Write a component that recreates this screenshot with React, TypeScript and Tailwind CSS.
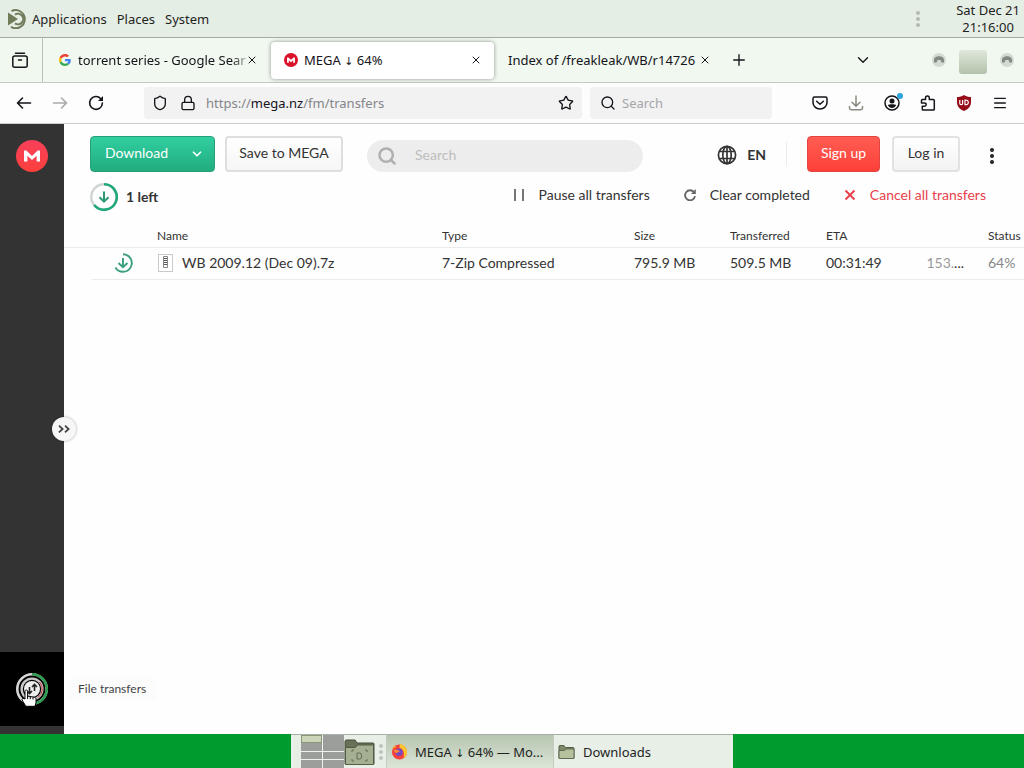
import type { ReactNode } from 'react';
import { ChevronDown, Lock, Menu, Plus, Search, Shield, Star, X } from 'lucide-react';

const CHROME_FONT = "font-['Noto_Sans',sans-serif]";
const MEGA_FONT = "font-['Lato',sans-serif]";

interface IconButtonProps {
    label: string;
    className?: string;
    children?: ReactNode;
}

function IconButton({ label, className = '', children }: IconButtonProps) {
    return (
        <button type="button" aria-label={label} className={`flex shrink-0 items-center justify-center ${className}`}>
            {children}
        </button>
    );
}

function MegaLogo({ className }: { className: string }) {
    return (
        <svg className={className} viewBox="0 0 32 32" aria-hidden="true">
            <defs>
                <linearGradient id="mega-red" x1="0" y1="0" x2="0" y2="1">
                    <stop offset="0" stopColor="#f9405a" />
                    <stop offset="1" stopColor="#fb3f3d" />
                </linearGradient>
            </defs>
            <circle cx="16" cy="16" r="16" fill="url(#mega-red)" />
            <path d="M8 21.5V10.5h2.4l5.6 5.4 5.6-5.4H24v11h-3.4v-5.8L16 20l-4.6-4.3v5.8z" fill="#fff" />
        </svg>
    );
}

/* Small tab icon: deeper red and a heavier letter mark than the big logo */
function MegaFavicon() {
    return (
        <svg className="mr-[6px] h-[14px] w-[14px] shrink-0" viewBox="0 0 32 32" aria-hidden="true">
            <circle cx="16" cy="16" r="16" fill="#d9122a" />
            <path d="M7 22V10h3l6 5.600 6-5.600h3v12h-4v-5.500l-5 4.600-5-4.600V22z" fill="#fff" />
        </svg>
    );
}

function DownArrow() {
    return <span className="font-['DejaVu_Sans',sans-serif] text-[11px]">↓</span>;
}

/* Desktop panel at the top */
function TopPanel() {
    return (
        <header className="flex h-[38px] shrink-0 items-center border-b border-[#a3aba3] bg-[#e5eee4] pr-1 pl-2 text-[13px] text-[#1e231e]">
            <svg className="mr-1 h-5 w-5 shrink-0" viewBox="0 0 20 20" fill="none" aria-hidden="true">
                <path d="M0 3.5l10 6.500-10 6.500z" fill="#707b58" />
                <path d="M3.500 2.2A9 9 0 1 1 3 17.8" stroke="#6f7a5a" strokeWidth="2" />
                <path d="M7 5.6A5.3 5.3 0 1 1 7 14.4" stroke="#6f7a5a" strokeWidth="2" />
            </svg>
            <nav className="flex gap-[10px] pt-[2px]">
                <button type="button">Applications</button>
                <button type="button">Places</button>
                <button type="button">System</button>
            </nav>
            <div className="ml-auto flex items-center gap-9">
                <svg className="h-4 w-1" viewBox="0 0 4 16" fill="#b3bab3" aria-hidden="true">
                    <circle cx="2" cy="2" r="2" />
                    <circle cx="2" cy="8" r="2" />
                    <circle cx="2" cy="14" r="2" />
                </svg>
                <time className="text-center text-[13px] leading-[17px]">
                    Sat Dec 21
                    <br />
                    21:16:00
                </time>
            </div>
        </header>
    );
}

function WindowDot() {
    return (
        <svg className="h-4 w-4" viewBox="0 0 16 16" aria-hidden="true">
            <circle cx="8" cy="8" r="7" fill="#d3dad1" />
            <path d="M3 8c0-5 10-5 10 0v2.500h-2.500L9.500 8h-3l-1 2.500H3z" fill="#828882" />
        </svg>
    );
}

/* Firefox tab strip */
function TabStrip() {
    return (
        <div className="flex h-[45px] shrink-0 items-center border-b border-[#c3cbc3] bg-[#f0f8ef] text-[13px] text-[#15141a]">
            <div className="flex h-full w-[43px] shrink-0 items-center border-r border-[#b9c2b9]">
                <IconButton label="Recent browsing" className="ml-3 h-4 w-4">
                    <svg className="h-4 w-4" viewBox="0 0 16 16" fill="none" stroke="#15141a" strokeWidth="1.5" strokeLinecap="round">
                        <path d="M3.500 1.200h9" />
                        <rect x="0.8" y="4" width="14.400" height="11.200" rx="2" />
                        <path d="M6.500 8h3" />
                    </svg>
                </IconButton>
            </div>

            <div className="flex w-[228px] shrink-0 items-center justify-between pr-[14px] pl-4">
                <div className="flex items-center">
                    <svg className="mr-[7px] h-3 w-3 shrink-0" viewBox="0 0 48 48" aria-hidden="true">
                        <path fill="#ea4335" d="M24 9.500c3.500 0 6.700 1.200 9.200 3.600l6.900-6.900C35.900 2.400 30.500 0 24 0 14.600 0 6.500 5.400 2.600 13.200l8 6.200C12.400 13.700 17.700 9.500 24 9.500z" />
                        <path fill="#4285f4" d="M47 24.600c0-1.600-.2-3.100-.4-4.600H24v9h12.900c-.6 3-2.300 5.500-4.800 7.200l7.700 6C44.400 38 47 31.800 47 24.600z" />
                        <path fill="#fbbc05" d="M10.500 28.600a14.500 14.500 0 0 1 0-9.200l-8-6.200a24 24 0 0 0 0 21.600z" />
                        <path fill="#34a853" d="M24 48c6.500 0 11.900-2.100 15.900-5.800l-7.700-6c-2.200 1.500-4.900 2.300-8.200 2.300-6.300 0-11.600-4.200-13.500-9.900l-8 6.200C6.500 42.600 14.600 48 24 48z" />
                    </svg>
                    <span className="pt-[2px] whitespace-nowrap [mask-image:linear-gradient(to_left,rgba(0,0,0,0.3),black_14px)]">
                        torrent series - Google Sear
                    </span>
                </div>
                <IconButton label="Close tab" className="h-3 w-3">
                    <X className="h-3 w-3" />
                </IconButton>
            </div>

            <div className="flex h-[37px] w-[223px] shrink-0 items-center rounded-[4px] bg-white pr-3 pl-[13px] shadow-[0_0_4px_rgba(0,0,0,0.4)]">
                <MegaFavicon />
                <span className="flex-1 pt-[2px] whitespace-nowrap">
                    MEGA <DownArrow /> 64%
                </span>
                <IconButton label="Close tab" className="h-3 w-3">
                    <X className="h-3 w-3" />
                </IconButton>
            </div>

            <div className="flex shrink-0 items-center pl-[14px]">
                <span className="pt-[2px] whitespace-nowrap">Index of /freakleak/WB/r14726</span>
                <IconButton label="Close tab" className="ml-1 h-3 w-3">
                    <X className="h-3 w-3" />
                </IconButton>
            </div>
            <IconButton label="New tab" className="ml-5 h-4 w-4">
                <Plus className="h-[18px] w-[18px] shrink-0" strokeWidth={1.8} />
            </IconButton>

            <div className="ml-auto flex items-center">
                <IconButton label="List all tabs" className="mr-15 h-4 w-4">
                    <ChevronDown className="h-[18px] w-[18px] shrink-0" strokeWidth={1.8} />
                </IconButton>
                <IconButton label="Minimize">
                    <WindowDot />
                </IconButton>
                <IconButton
                    label="Maximize"
                    className="mx-3 mt-1 h-6 w-7 rounded-[3px] bg-linear-to-b from-[#dfe8da] to-[#b3c2ac]"
                />
                <IconButton label="Close window" className="mr-[9px]">
                    <WindowDot />
                </IconButton>
            </div>
        </div>
    );
}

/* Firefox navigation bar */
function NavBar() {
    return (
        <div className="flex h-[41px] shrink-0 items-center border-b border-[#cccccc] bg-[#fdfdfd] pr-4 pl-4 text-[13px] text-[#15141a]">
            <div className="flex shrink-0 items-center gap-5">
                <IconButton label="Back" className="h-4 w-4">
                    <svg className="h-4 w-4" viewBox="0 0 16 16" fill="none" stroke="#15141a" strokeWidth="1.6" strokeLinecap="round" strokeLinejoin="round">
                        <path d="M14.500 8H1.500M6.500 3l-5 5 5 5" />
                    </svg>
                </IconButton>
                <IconButton label="Forward" className="h-4 w-4">
                    <svg className="h-4 w-4" viewBox="0 0 16 16" fill="none" stroke="#aaaaad" strokeWidth="1.600" strokeLinecap="round" strokeLinejoin="round">
                        <path d="M1.500 8h13M9.500 3l5 5-5 5" />
                    </svg>
                </IconButton>
                <IconButton label="Reload" className="h-4 w-4">
                    <svg className="h-4 w-4" viewBox="0 0 16 16" fill="none" stroke="#15141a" strokeWidth="1.600" strokeLinecap="round">
                        <path d="M12.800 3.700A6.400 6.400 0 1 0 14.400 8" />
                        <path d="M15 1v5h-5z" fill="#15141a" stroke="none" />
                    </svg>
                </IconButton>
            </div>

            <div className="ml-10 flex h-8 flex-1 items-center rounded-[4px] bg-[#f2f2f3] px-2">
                <Shield className="mr-3 h-4 w-4 shrink-0" strokeWidth={2} />
                <Lock className="mr-[10px] h-4 w-4 shrink-0" strokeWidth={2} />
                <a href="https://mega.nz/fm/transfers" className="flex-1 pt-[2px] whitespace-nowrap text-[#85858a]">
                    https://<span className="text-[#15141a]">mega.nz</span>/fm/transfers
                </a>
                <IconButton label="Bookmark" className="h-4 w-4">
                    <Star className="h-4 w-4 shrink-0" strokeWidth={2} />
                </IconButton>
            </div>

            <label className="ml-2 flex h-8 w-[182px] shrink-0 items-center rounded-[4px] bg-[#f2f2f3] px-[10px]">
                <Search className="mr-[6px] h-4 w-4 shrink-0" strokeWidth={2} />
                <input
                    type="text"
                    aria-label="Web search"
                    placeholder="Search"
                    className="w-full min-w-0 bg-transparent pt-[2px] outline-none placeholder:text-[#a5a5a8]"
                />
            </label>

            <div className="ml-10 flex shrink-0 items-center gap-5">
                <IconButton label="Save to Pocket" className="h-4 w-4">
                    <svg className="h-4 w-4" viewBox="0 0 16 16" fill="none" stroke="#15141a" strokeWidth="1.500" strokeLinecap="round" strokeLinejoin="round">
                        <path d="M2.500 2h11c.8 0 1.500.6 1.500 1.400V7.500a7 6.600 0 0 1-14 0V3.400C1 2.600 1.700 2 2.500 2z" />
                        <path d="M4.600 6.200L8 9.300l3.400-3.100" />
                    </svg>
                </IconButton>
                <IconButton label="Downloads" className="h-4 w-4">
                    <svg className="h-4 w-4" viewBox="0 0 16 16" fill="none" stroke="#8a8a80" strokeWidth="1.500" strokeLinecap="round" strokeLinejoin="round">
                        <path d="M8 1v10M4 7.200l4 3.900 4-3.900M1.500 11.500V13c0 1 .7 1.700 1.700 1.700h9.600c1 0 1.700-.7 1.700-1.700v-1.500" />
                    </svg>
                </IconButton>
                <IconButton label="Account" className="relative h-4 w-4">
                    <svg className="h-4 w-4" viewBox="0 0 16 16" aria-hidden="true">
                        <circle cx="8" cy="8" r="7" fill="none" stroke="#15141a" strokeWidth="1.500" />
                        <circle cx="8" cy="6" r="2.500" fill="#15141a" />
                        <path d="M3.800 10c1.200-1 7.200-1 8.400 0-.8 2-2.400 3-4.200 3s-3.400-1-4.200-3z" fill="#15141a" />
                    </svg>
                    <span className="absolute -top-[2px] -right-[3px] h-[6px] w-[6px] rounded-full bg-[#2ba3dd]" />
                </IconButton>
                <IconButton label="Extensions" className="h-4 w-4">
                    <svg className="h-4 w-4" viewBox="0 0 16 16" fill="none" stroke="#15141a" strokeWidth="1.500" strokeLinejoin="round">
                        <path d="M5.500 4.500V3a1.900 1.900 0 0 1 3.800 0v1.500h4c.6 0 1 .4 1 1v8.700c0 .5-.4.9-.9.900H3.200c-.5 0-.9-.4-.9-.9v-2.900h2.200a1.700 1.700 0 0 0 0-3.400H1.500V5.400c0-.5.4-.9.900-.9z" />
                    </svg>
                </IconButton>
                <IconButton label="uBlock Origin" className="h-4 w-4">
                    <svg className="h-4 w-4" viewBox="0 0 16 16" aria-hidden="true">
                        <path d="M8 0c2.200 1.500 4.500 2 7 2v5c0 4.300-2.600 7.200-7 9-4.400-1.800-7-4.700-7-9V2c2.500 0 4.800-.5 7-2z" fill="#960c18" />
                        <path d="M3.800 5v3.500q0 1.200 1.400 1.200t1.400-1.200V5M9 5v4.700q3.300.2 3.300-2.300T9 5z" fill="none" stroke="#fff" strokeWidth="1.200" />
                    </svg>
                </IconButton>
                <IconButton label="Open application menu" className="h-4 w-4">
                    <Menu className="h-4 w-4" strokeWidth={2} />
                </IconButton>
            </div>
        </div>
    );
}

/* Dark MEGA rail with the transfers button at its foot */
function Sidebar() {
    return (
        <aside className="relative flex w-16 shrink-0 flex-col items-center bg-[#333333] pt-4">
            <a href="#home" aria-label="MEGA home">
                <MegaLogo className="h-8 w-8" />
            </a>
            <button
                type="button"
                aria-label="Expand sidebar"
                className="absolute top-[293px] -right-3 flex h-6 w-6 items-center justify-center rounded-full bg-[#f7f7f7] shadow-[0_0_3px_rgba(0,0,0,0.35)]"
            >
                <svg className="h-3 w-3" viewBox="0 0 12 12" fill="none" stroke="#444" strokeWidth="1.800" aria-hidden="true">
                    <path d="M1 2.700L4.600 6 1 9.300M7 2.700L10.600 6 7 9.300" />
                </svg>
            </button>
            <div className="mt-auto mb-2 flex h-[74px] w-full items-center bg-black">
                <button type="button" aria-labelledby="transfers-tip" className="relative ml-4 h-8 w-8">
                    <svg className="h-8 w-8" viewBox="0 0 32 32" fill="none" aria-hidden="true">
                        <circle cx="16" cy="16" r="14.700" stroke="#d6d6d6" strokeWidth="2.600" />
                        <path d="M16 1.300A14.700 14.700 0 0 1 19 30.400" stroke="#2f9b50" strokeWidth="2.600" />
                        <circle cx="16" cy="16" r="10.400" stroke="#c9c9c9" strokeWidth="2.400" />
                        <path d="M23.500 9A10.400 10.400 0 0 1 22 24.500" stroke="#c63a40" strokeWidth="1" />
                        <circle cx="16" cy="16" r="8" fill="#ededed" />
                        <path d="M18.500 18v-6M16 14l2.500-2.500L21 14M13.500 14v6M11 18l2.500 2.500L16 18" stroke="#222" strokeWidth="1.600" />
                    </svg>
                    {/* Hand pointer */}
                    <svg className="absolute top-4 left-[5px] h-[18px] w-4" viewBox="0 0 16 18" aria-hidden="true">
                        <path
                            d="M4 10V2.500C4 .5 6.600.5 6.600 2.500V7l6.800 1.300c1 .2 1.600.8 1.600 1.800v3.400L14 17.300H4.800L2 12.500 1 10.500c0-1 1.500-1.500 3-.5z"
                            fill="#fff"
                            stroke="#000"
                            strokeWidth="1"
                        />
                        <path d="M6.600 7v3M9.300 7.700v2.500M12 8.300v2.200" stroke="#000" strokeWidth="1" />
                    </svg>
                </button>
            </div>
            <span
                id="transfers-tip"
                role="tooltip"
                className="absolute bottom-[33px] left-full ml-1 rounded-[4px] bg-[#fcfcfc] px-[10px] py-1 text-xs leading-4 whitespace-nowrap text-[#444]"
            >
                File transfers
            </span>
        </aside>
    );
}

function MegaToolbar() {
    return (
        <div className="flex items-center pt-3 pl-[26px] text-sm text-[#333]">
            <div className="flex h-9 w-[125px] shrink-0 rounded-[4px] border border-[#27a078] bg-linear-to-b from-[#31cfa0] to-[#21ac7f] text-white">
                <button type="button" className="flex-1 pr-0 pb-[2px] pl-[2px]">
                    Download
                </button>
                <IconButton label="Download options" className="w-[34px]">
                    <ChevronDown className="h-[14px] w-[14px]" strokeWidth={3} />
                </IconButton>
            </div>
            <button
                type="button"
                className="ml-[10px] h-9 w-[118px] shrink-0 rounded-[4px] border-2 border-[#dedede] bg-linear-to-b from-white to-[#f6f6f6] pb-[2px]"
            >
                Save to MEGA
            </button>
            <label className="mt-1 ml-6 flex h-8 w-[276px] min-w-0 items-center rounded-full bg-[#ededed] pl-[10px]">
                <Search className="mr-[18px] h-5 w-5 shrink-0 text-[#b0b0b0]" strokeWidth={3} />
                <input
                    type="text"
                    aria-label="Search transfers"
                    placeholder="Search"
                    className="w-full min-w-0 bg-transparent pb-[2px] outline-none placeholder:text-[#bdbdbd]"
                />
            </label>

            <div className="ml-auto flex shrink-0 items-center pr-6">
                <button type="button" className="flex items-center gap-[10px] pt-[2px] font-bold">
                    <svg className="h-5 w-5" viewBox="0 0 20 20" fill="none" stroke="#333" strokeWidth="1.700" aria-hidden="true">
                        <circle cx="10" cy="10" r="8.600" />
                        <ellipse cx="10" cy="10" rx="4.200" ry="8.600" />
                        <path d="M10 1.400v17.200M2.600 6.500h14.800M2.600 13.500h14.800" />
                    </svg>
                    EN
                </button>
                <span className="ml-5 h-6 w-px bg-[#ececec]" />
                <button
                    type="button"
                    className="ml-5 h-9 w-[73px] rounded-[4px] border border-[#e2453f] bg-linear-to-b from-[#ff5c52] to-[#fd3f38] pb-[2px] text-white"
                >
                    Sign up
                </button>
                <button
                    type="button"
                    className="ml-3 h-9 w-[68px] rounded-[4px] border-2 border-[#e2e2e2] bg-linear-to-b from-white to-[#f3f3f3] pb-[2px]"
                >
                    Log in
                </button>
                <IconButton label="More options" className="ml-6 h-9 w-4 pt-1">
                    <svg className="h-4 w-4" viewBox="0 0 16 16" fill="#222" aria-hidden="true">
                        <circle cx="8" cy="2" r="2" />
                        <circle cx="8" cy="8" r="2" />
                        <circle cx="8" cy="14" r="2" />
                    </svg>
                </IconButton>
            </div>
        </div>
    );
}

function TransferActions() {
    return (
        <div className="mt-[9px] flex h-8 items-center pr-[38px] pl-[26px] text-sm text-[#333]">
            <svg className="h-7 w-7 shrink-0" viewBox="0 0 28 28" fill="none" aria-hidden="true">
                <circle cx="14" cy="14" r="12.700" stroke="#cfd3d1" strokeWidth="2.400" />
                <path d="M14 1.300A12.700 12.700 0 1 1 4.200 22" stroke="#1fa878" strokeWidth="2.600" />
                <path d="M14 8.500v10M9.500 14.300l4.500 4.400 4.500-4.400" stroke="#2b9a73" strokeWidth="2" />
            </svg>
            <strong className="ml-2 font-bold">1 left</strong>
            <div className="ml-auto flex items-center pb-1">
                <button type="button" className="flex items-center gap-[14px]">
                    <svg className="h-3 w-3" viewBox="0 0 12 12" fill="#777" aria-hidden="true">
                        <path d="M1 0h2v12H1zM9 0h2v12H9z" />
                    </svg>
                    Pause all transfers
                </button>
                <button type="button" className="ml-[34px] flex items-center gap-[14px]">
                    <svg className="h-3 w-3" viewBox="0 0 12 12" fill="none" stroke="#666" strokeWidth="1.900" aria-hidden="true">
                        <path d="M10 3.200A5 5 0 1 0 11 7.200" />
                        <path d="M11.800 0v5H7z" fill="#666" stroke="none" />
                    </svg>
                    Clear completed
                </button>
                <button type="button" className="ml-[34px] flex items-center gap-[14px] text-[#e8414c]">
                    <svg className="h-3 w-3" viewBox="0 0 12 12" stroke="currentColor" strokeWidth="2" aria-hidden="true">
                        <path d="M1.500 1.500l9 9M10.500 1.500l-9 9" />
                    </svg>
                    Cancel all transfers
                </button>
            </div>
        </div>
    );
}

function TransferTable() {
    return (
        <table className="mt-[7px] w-full table-fixed border-separate border-spacing-0 text-left text-[#333]">
            <colgroup>
                <col className="w-7" />
                <col className="w-[65px]" />
                <col />
                <col className="w-48" />
                <col className="w-24" />
                <col className="w-24" />
                <col className="w-[100px]" />
                <col className="w-[62px]" />
                <col className="w-9" />
            </colgroup>
            <thead>
                <tr className="h-7 text-xs whitespace-nowrap [&>th]:border-b [&>th]:border-[#ebebeb] [&>th]:p-0 [&>th]:pt-1 [&>th]:font-normal">
                    <th />
                    <th />
                    <th>Name</th>
                    <th>Type</th>
                    <th>Size</th>
                    <th>Transferred</th>
                    <th>ETA</th>
                    <th />
                    <th>Status</th>
                </tr>
            </thead>
            <tbody>
                <tr className="h-8 text-sm whitespace-nowrap [&>td]:border-b [&>td]:border-[#ebebeb] [&>td]:p-0 [&>td]:pb-[2px]">
                    <td className="border-none!" />
                    <td>
                        <svg className="ml-[21px] h-5 w-5" viewBox="0 0 20 20" fill="none" strokeWidth="1.900" aria-hidden="true">
                            <path d="M10 1.200A8.800 8.800 0 1 1 2.400 14.500" stroke="#3a9f7c" />
                            <path d="M10 5v9M5.500 10l4.500 4.300 4.500-4.300" stroke="#3a9f7c" />
                        </svg>
                    </td>
                    <td>
                        <div className="flex items-center gap-2">
                            <svg className="h-[18px] w-[17px] shrink-0" viewBox="0 0 17 18" fill="none" aria-hidden="true">
                                <rect x="1.500" y="0.500" width="14" height="17" fill="#fff" stroke="#c9c9c9" />
                                <path d="M6.500 2.500h4v11h-4z" stroke="#888" />
                                <path d="M7 4.500h3M7 6.500h3M7 8.500h3M7 10.500h3" stroke="#555" />
                            </svg>
                            WB 2009.12 (Dec 09).7z
                        </div>
                    </td>
                    <td>7-Zip Compressed</td>
                    <td>795.9 MB</td>
                    <td>509.5 MB</td>
                    <td>00:31:49</td>
                    <td className="text-right text-[#999]">
                        <span className="mr-6">
                            153.<span className="text-[#333]">...</span>
                        </span>
                    </td>
                    <td className="text-[#888]">64%</td>
                </tr>
            </tbody>
        </table>
    );
}

/* Desktop taskbar on the green wallpaper */
function Taskbar() {
    return (
        <footer className="flex h-[34px] shrink-0 justify-center bg-[#009b2e] text-[13px] text-[#1e231e]">
            <div className="flex w-[442px] items-center border-t border-[#a9b0a9] bg-[#e8efe7] pl-[10px]">
                <div className="grid h-full w-[43px] shrink-0 grid-cols-2 gap-px bg-[#eef2ed]">
                    <span className="bg-[#9b9e9b]">
                        <span className="block h-2 border border-[#8b9678] bg-[#cbd5b8]" />
                    </span>
                    <span className="bg-[#9b9e9b]" />
                    <span className="bg-[#9b9e9b]" />
                    <span className="bg-[#9b9e9b]" />
                    <span className="bg-[#9b9e9b]" />
                    <span className="bg-[#9b9e9b]" />
                </div>
                <IconButton label="Documents">
                    <svg className="h-7 w-[31px]" viewBox="0 0 31 28" fill="none" aria-hidden="true">
                        <path d="M1 26V3.500c0-1 .5-1.500 1.500-1.500H11l2 3h16c.7 0 1 .4 1 1v20z" fill="#687058" stroke="#444b3a" />
                        <path d="M1.500 26.500V9.500h10l2-2.500h16v19.500z" fill="#a5b092" stroke="#535c45" />
                        <path d="M8 14v-2h2M21 12h2v2M8 21v2h2M21 23h2v-2M13 15h2.500a2 2 0 0 1 2 2v2a2 2 0 0 1-2 2H13z" stroke="#626d52" />
                    </svg>
                </IconButton>
                <svg className="mr-[3px] ml-1 h-4 w-1 shrink-0" viewBox="0 0 4 16" fill="#bcc3bc" aria-hidden="true">
                    <circle cx="2" cy="2" r="2" />
                    <circle cx="2" cy="8" r="2" />
                    <circle cx="2" cy="14" r="2" />
                </svg>
                <button
                    type="button"
                    className="flex h-full w-[168px] shrink-0 items-center gap-[7px] border-r border-l border-[#c3ccc0] bg-linear-to-b from-[#b6c5b0] to-[#dce6d8] px-1"
                >
                    <svg className="h-[17px] w-[17px] shrink-0" viewBox="0 0 18 18" aria-hidden="true">
                        <circle cx="9" cy="9.500" r="8" fill="#f5413e" />
                        <path d="M10 1c4 1 7 4.500 7 8.500 0 3-1.600 5.500-4 6.900C15 11 13 6 9 5c0-1.500.2-3 1-4z" fill="#ffc52e" />
                        <path d="M1.500 6.500C2 4.500 3 3.500 4 2.500c.3 1 .8 1.500 2 1.800z" fill="#ff9a2b" />
                        <circle cx="8.500" cy="9.800" r="3.900" fill="#7c48bd" />
                        <path d="M3 7.500c3-1 5 0 6.500 1.500-2 0-2.500 1.500-3.500 1.700S3.500 9.500 3 7.500z" fill="#ff8b31" />
                    </svg>
                    <span className="pt-[2px] whitespace-nowrap">
                        MEGA <DownArrow /> 64% — Mo...
                    </span>
                </button>
                <button type="button" className="flex h-full items-center gap-2 pl-1">
                    <svg className="h-4 w-[17px]" viewBox="0 0 17 16" aria-hidden="true">
                        <path d="M1 14V2.500c0-.7.300-1 1-1h4l1.500 2H15c.7 0 1 .3 1 1V14z" fill="#7d8967" stroke="#555e46" />
                        <path d="M1 14.500V6.500h5.500l1.500-1.500h8v9.500z" fill="#b5c29e" stroke="#606b50" />
                    </svg>
                    <span className="pt-[2px]">Downloads</span>
                </button>
            </div>
        </footer>
    );
}

export default function App() {
    return (
        <div className={`flex min-h-screen flex-col bg-white ${CHROME_FONT}`}>
            <TopPanel />
            <TabStrip />
            <NavBar />
            <div className={`flex flex-1 bg-[#fefefe] ${MEGA_FONT}`}>
                <Sidebar />
                <main className="min-w-0 flex-1">
                    <MegaToolbar />
                    <TransferActions />
                    <TransferTable />
                </main>
            </div>
            <Taskbar />
        </div>
    );
}
